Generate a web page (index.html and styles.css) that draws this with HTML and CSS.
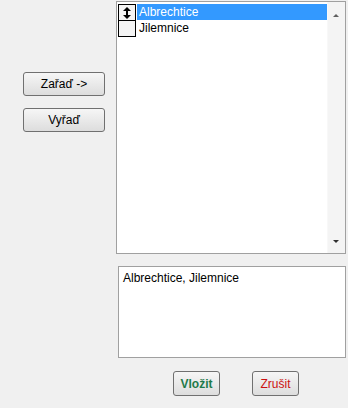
FILE: index.html
```html
<!DOCTYPE html>
<html>
<head>
<title>Výběr obcí</title>
<link rel="stylesheet" href="styles.css">
</head>
<body>

<div class="dialog">
  <div class="side">
    <button class="btn">Zařaď -&gt;</button>
    <button class="btn">Vyřaď</button>
  </div>

  <div class="main">
    <div class="listbox">
      <ul class="items">
        <li class="item selected">
          <span class="handle">
            <svg width="10" height="12" viewBox="0 0 10 12">
              <path d="M5 0 L9 4 L1 4 Z M5 12 L9 8 L1 8 Z" fill="#000"/>
              <rect x="4" y="3" width="2" height="6" fill="#000"/>
            </svg>
          </span>
          <span class="label">Albrechtice</span>
        </li>
        <li class="item">
          <span class="handle"></span>
          <span class="label">Jilemnice</span>
        </li>
      </ul>
      <div class="scroll">
        <span class="arrow up"></span>
        <span class="arrow down"></span>
      </div>
    </div>

    <div class="memo">Albrechtice, Jilemnice</div>

    <div class="actions">
      <button class="btn small ok">Vložit</button>
      <button class="btn small cancel">Zrušit</button>
    </div>
  </div>
</div>

</body>
</html>
```

FILE: styles.css
```css
body {
  margin: 0;
  background: #f0f0f0;
  font-family: "Liberation Sans", Arial, sans-serif;
  font-size: 12px;
  color: #000;
}
.dialog {
  display: flex;
  width: 348px;
  height: 408px;
}
.side {
  width: 116px;
  box-sizing: border-box;
  padding: 72px 0 0 23px;
  display: flex;
  flex-direction: column;
  gap: 12px;
}
.btn {
  font-family: "Liberation Sans", Arial, sans-serif;
  font-size: 12px;
  width: 82px;
  height: 24px;
  padding: 0;
  border: 1px solid #707070;
  border-radius: 3px;
  background: linear-gradient(#f6f6f6, #dddddd);
  color: #000;
}
.main {
  width: 230px;
  display: flex;
  flex-direction: column;
}
.listbox {
  margin-top: 1px;
  height: 253px;
  box-sizing: border-box;
  border: 1px solid #a0a0a0;
  background: #fff;
  display: flex;
}
.items {
  list-style: none;
  margin: 0;
  padding: 2px 0 0 1px;
  flex: 1;
}
.item {
  display: flex;
  height: 16px;
  line-height: 16px;
}
.handle {
  flex-shrink: 0;
  width: 18px;
  height: 17px;
  box-sizing: border-box;
  border: 1px solid #000;
  background: #f4f4f4;
  display: flex;
  align-items: center;
  justify-content: center;
}
.label {
  flex: 1;
  height: 16px;
  padding-left: 2px;
  margin-left: 1px;
}
.selected .label {
  background: #3399ff;
  color: #fff;
}
.scroll {
  width: 17px;
  background: #f4f4f4;
  border-left: 1px solid #f8f8f8;
  position: relative;
}
.arrow {
  position: absolute;
  left: 5px;
  width: 0;
  height: 0;
  border-left: 3px solid transparent;
  border-right: 3px solid transparent;
}
.arrow.up {
  top: 12px;
  border-bottom: 3px solid #606060;
}
.arrow.down {
  bottom: 10px;
  border-top: 3px solid #303030;
}
.memo {
  margin: 12px 0 0 2px;
  height: 92px;
  box-sizing: border-box;
  border: 1px solid #a0a0a0;
  background: #fff;
  padding: 3px 4px;
  line-height: 16px;
}
.actions {
  display: flex;
  gap: 32px;
  padding: 13px 0 0 57px;
}
.btn.small {
  width: 47px;
  height: 25px;
  font-size: 12px;
}
.ok {
  color: #1e7a4a;
  font-weight: bold;
}
.cancel {
  color: #cc1111;
}
```
